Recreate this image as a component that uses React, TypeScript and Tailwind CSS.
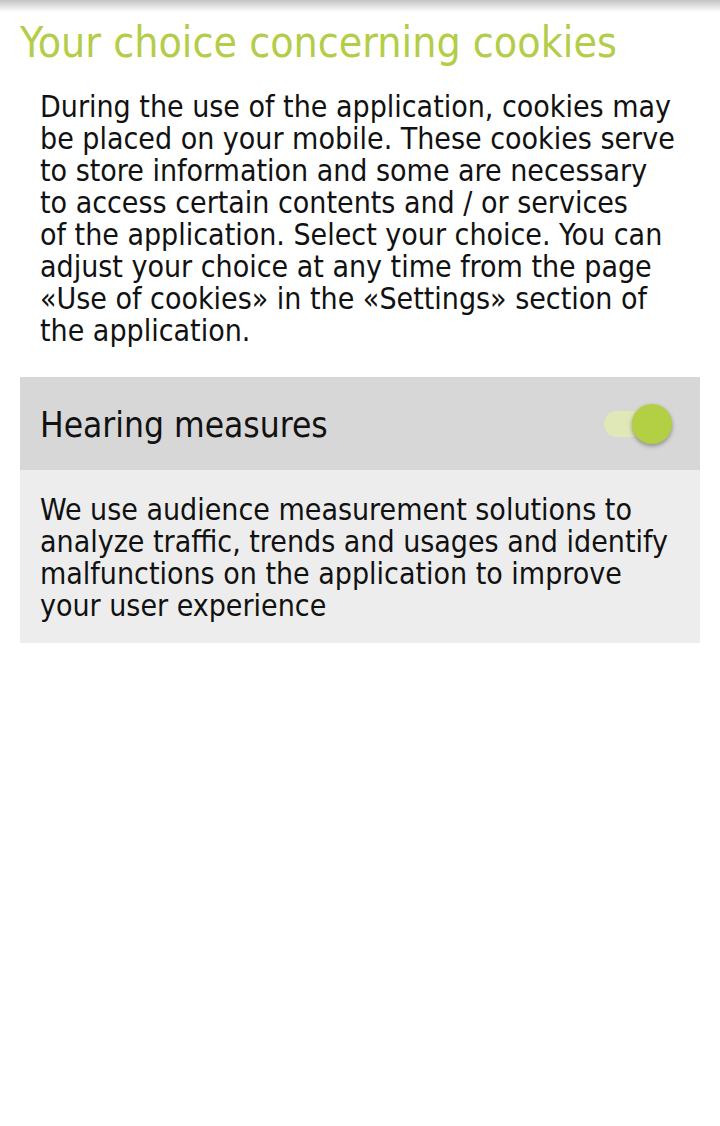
const INTRO = [
  'During the use of the application, cookies may',
  'be placed on your mobile. These cookies serve',
  'to store information and some are necessary',
  'to access certain contents and / or services',
  'of the application. Select your choice. You can',
  'adjust your choice at any time from the page',
  '«Use of cookies» in the «Settings» section of',
  'the application.',
];

const HEARING = [
  'We use audience measurement solutions to',
  'analyze traffic, trends and usages and identify',
  'malfunctions on the application to improve',
  'your user experience',
];

function Lines({ lines }: { lines: string[] }) {
  return (
    <>
      {lines.map((line) => (
        <span key={line} className="block whitespace-nowrap">
          {line}
        </span>
      ))}
    </>
  );
}

function Toggle({ on }: { on: boolean }) {
  return (
    <div className="relative h-11 w-[76px]">
      <div className="absolute left-[4px] top-[9px] h-[26px] w-[58px] rounded-full bg-[#dfe8b6]" />
      <div
        className={`absolute top-[2px] h-[40px] w-[40px] rounded-full bg-[#b3cf43] shadow-[0_2px_4px_rgba(0,0,0,0.35)] ${on ? 'left-[32px]' : 'left-0'}`}
      />
    </div>
  );
}

export default function App() {
  return (
    <div className="min-h-[1126px] w-[720px] bg-white font-['DejaVu_Sans_Condensed','DejaVu_Sans',sans-serif] text-[#111]">
      <div className="h-3 bg-gradient-to-b from-[#c4c4c4] to-white" />
      <h1 className="px-5 pt-[7px] text-[42.5px] leading-[48px] text-[#b3cd48]">Your choice concerning cookies</h1>
      <p className="px-10 pt-[24px] text-[30px] leading-[32px]">
        <Lines lines={INTRO} />
      </p>

      <section className="mx-5 mt-[30px]">
        <div className="flex h-[93px] items-center justify-between bg-[#d7d7d7] pl-5 pr-6">
          <span className="pt-[4px] text-[35px]">Hearing measures</span>
          <Toggle on />
        </div>
        <p className="bg-[#ededed] px-5 pt-[24px] pb-[21px] text-[30px] leading-[32px]">
          <Lines lines={HEARING} />
        </p>
      </section>
    </div>
  );
}
